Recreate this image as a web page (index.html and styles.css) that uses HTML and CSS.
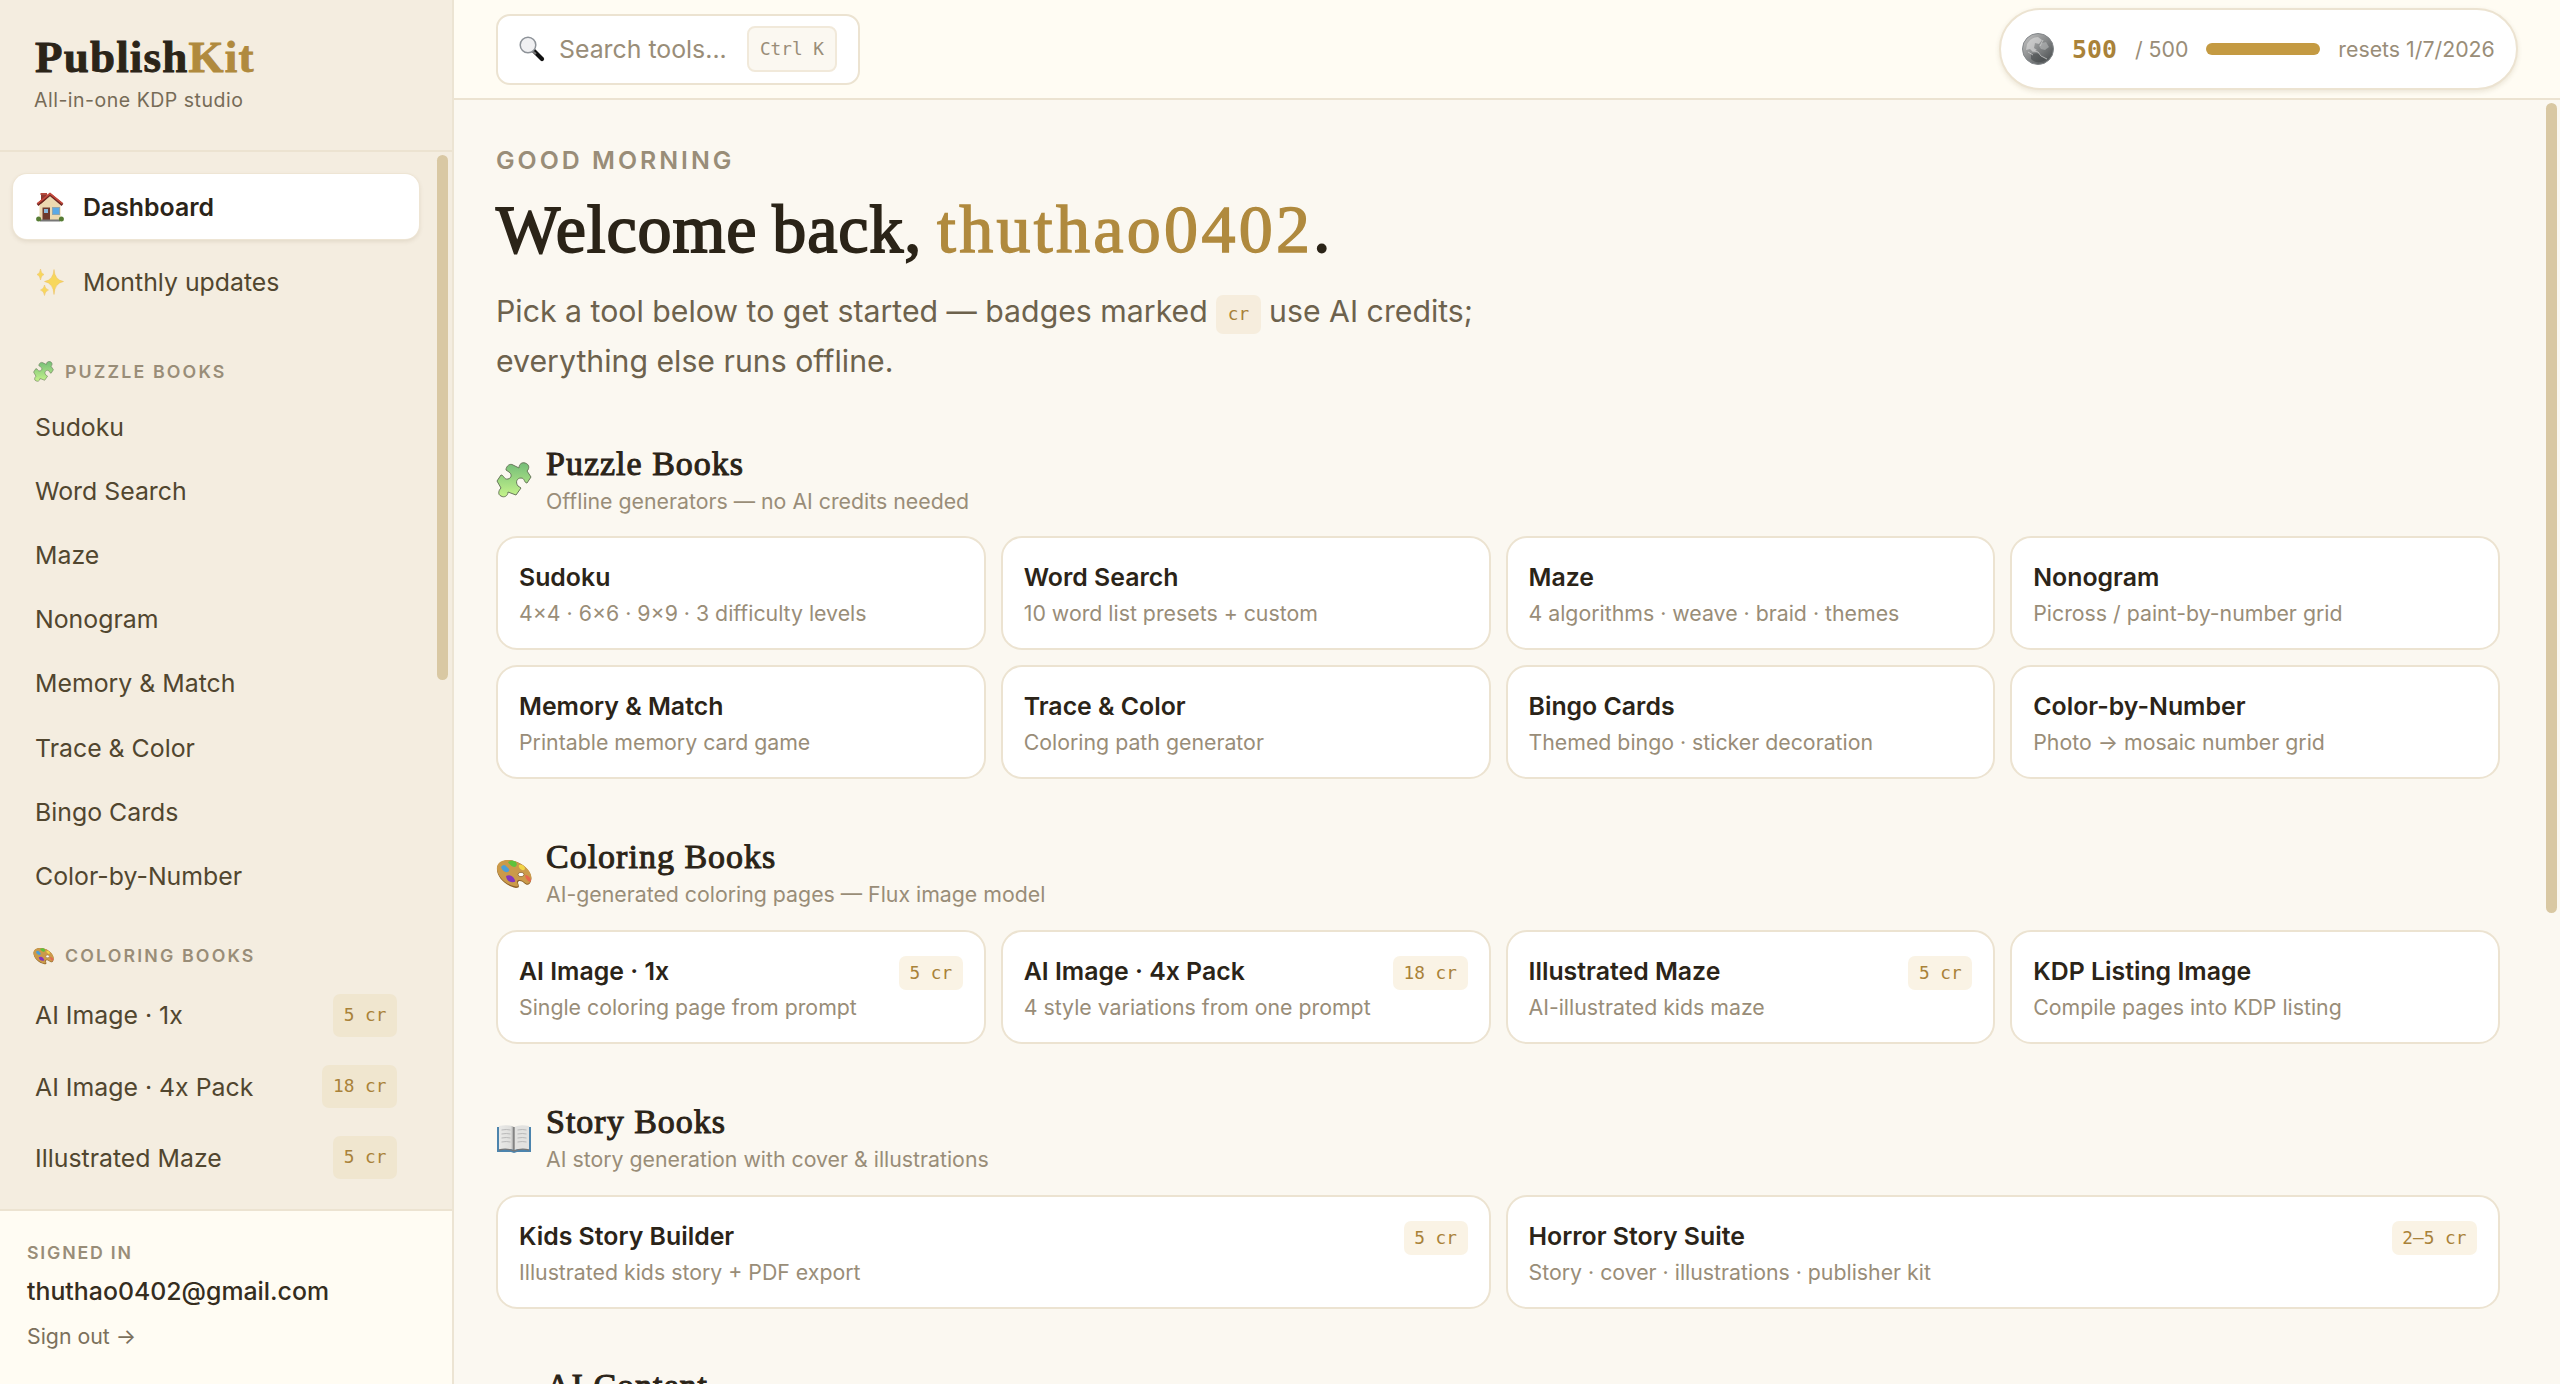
FILE: index.html
```html
<!DOCTYPE html>
<html lang="en">
<head>
<meta charset="utf-8">
<title>PublishKit</title>
<link rel="stylesheet" href="styles.css">
</head>
<body>
<svg class="defs" width="0" height="0" aria-hidden="true">
  <defs>
    <linearGradient id="green" x1="0" y1="0" x2="0" y2="1"><stop offset="0" stop-color="#74bd78"/><stop offset="1" stop-color="#c5f38b"/></linearGradient>
    <linearGradient id="page" x1="0" y1="0" x2="1" y2="0"><stop offset="0" stop-color="#e9e9e7"/><stop offset=".8" stop-color="#dededc"/><stop offset="1" stop-color="#8e8e8e"/></linearGradient>
    <linearGradient id="silver" x1="0" y1="0" x2="1" y2="1"><stop offset="0" stop-color="#c9c9c9"/><stop offset=".45" stop-color="#8c8e8f"/><stop offset="1" stop-color="#404446"/></linearGradient>
    <symbol id="i-puzzle" viewBox="0 0 36 36">
      <path d="M10 8C10 4 14 1 17 3L23 6C23 2 26 0 29 1C33 2 34 6 31 9L35 15L31 21C28 21 29 16 25 16C21 16 19 20 22 24L25 26L20 33L12 30C12 34 8 36 5 34C2 33 2 29 5 26L1 19L5 13C8 13 8 18 12 17C16 16 16 12 13 10Z" fill="url(#green)" stroke="#68785a" stroke-width="1" stroke-linejoin="round"/>
    </symbol>
    <symbol id="i-palette" viewBox="0 0 36 36">
      <path d="M1 13C2 6 12 3 21 7C31 11 37 20 35 26C34 30 31 31 28 28C26 26 22 25 22 28C23 31 24 33 20 33C9 31 0 21 1 13Z" fill="#8a6028"/>
      <path d="M1 12C2 5 12 3 21 7C31 11 37 19 35 25C34 29 31 30 28 27C26 25 21 24 21 27C22 30 23 32 20 31.500C9 30 0 20 1 12Z" fill="#cb9a4a"/>
      <path d="M5 12q3-4 6 0q4 3 1 5q-5 1-7-5" fill="#4c9fd8"/>
      <path d="M12 7q4-3 8 0q2 3-1 5q-4 0-7-5" fill="#5fc23c"/>
      <path d="M23 10q4-1 6 3q0 3-3 2q-4-2-3-5" fill="#f1d446"/>
      <path d="M29 20q4 0 6 5q0 3-3 1q-3-3-3-6" fill="#e8664e"/>
      <path d="M10 21q4-2 7 1q4 5 1 5q-7 1-8-6" fill="#8436bd"/>
      <ellipse cx="25" cy="19.500" rx="3" ry="2.200" fill="#fff" stroke="#8a6028" stroke-width=".8"/>
    </symbol>
    <symbol id="i-book" viewBox="0 0 36 36">
      <path d="M1 7H35V32H21L18 33L15 32H1Z" fill="#4c84ad"/>
      <path d="M3 6Q12 4 18 7V30Q11 28 3 30Z" fill="url(#page)"/>
      <path d="M33 6Q24 4 18 7V30Q25 28 33 30Z" fill="#e2e2e0"/>
      <path d="M3 30Q11 28 18 31Q25 28 33 30" fill="none" stroke="#777" stroke-width="1.300"/>
      <path d="M18 7V31" stroke="#777" stroke-width="1.300"/>
      <path d="M5.500 10q5-1 9 0M5.500 14q5-1 9 0M5.500 18q5-1 9 0M5.500 22q5-1 9 0M21.500 10q5-1 9 0M21.500 14q5-1 9 0M21.500 18q5-1 9 0M21.500 22q5-1 9 0" fill="none" stroke="#b9b9b9" stroke-width="1"/>
    </symbol>
    <symbol id="i-house" viewBox="0 0 28 30">
      <path d="M5 1.500h5.500V8L5 13Z" fill="#8d3a30"/><path d="M4.500 1h6.500v2H4.500z" fill="#b3483c"/>
      <path d="M3.500 13L14 4L24.500 13V28.500H3.500Z" fill="#ecd9b0"/>
      <path d="M1.500 12.800L14 2.500L26.500 12.800" fill="none" stroke="#6d2620" stroke-width="2.800"/>
      <path d="M1.500 11.600L14 1.500L26.500 11.600" fill="none" stroke="#c4483b" stroke-width="1.700"/>
      <path d="M6.500 15.500h7.500V28.500H6.500z" fill="#6e3a2c"/><path d="M8 17h4v4H8z" fill="#8ab9db"/>
      <path d="M16 15h8v8h-8z" fill="#8fa5ad"/><path d="M17 16h6v6h-6z" fill="#5aa9e6"/>
      <path d="M4 28.500h20" stroke="#777" stroke-width="2"/>
      <circle cx="2.600" cy="27" r="2.500" fill="#567c34"/><circle cx="25.400" cy="27" r="2.500" fill="#567c34"/>
    </symbol>
    <symbol id="i-sparkles" viewBox="0 0 28 28">
      <path d="M18 1.500Q18.700 12 27.500 13.500Q18.700 15 18 26.500Q17.300 15 8.500 13.500Q17.300 12 18 1.500ZM4.500 1Q5 5.500 8 6.500Q5 7.500 4.500 12Q4 7.500 1 6.500Q4 5.500 4.500 1ZM8.500 17Q9 21 12.500 22Q9 23 8.500 27.500Q8 23 4.500 22Q8 21 8.500 17Z" fill="#f7d75c" stroke="#ecbf62" stroke-width=".5"/>
    </symbol>
    <symbol id="i-search" viewBox="0 0 26 26">
      <path d="M15 15L23 23" stroke="#111" stroke-width="4.200" stroke-linecap="round"/>
      <path d="M14 15.500L17 18" stroke="#777" stroke-width="2"/>
      <circle cx="9" cy="9" r="7.800" fill="#f0f0f2" stroke="#8d9298" stroke-width="1.500"/>
    </symbol>
    <symbol id="i-coin" viewBox="0 0 32 32">
      <circle cx="16" cy="16" r="15.500" fill="url(#silver)" stroke="#83878a" stroke-width="1"/>
      <path d="M5 11q4-7 11-7l4 3-3 4-4-1-1 5 3 2-4 2-3-3-4 1Z" fill="#dadada" opacity=".65"/>
      <path d="M20 10l4-1 3 5-4 3-4-1-2-3Z" fill="#c2c4c4" opacity=".5"/>
      <path d="M9 21q7-2 10 1l5 5q-9 5-15-1Z" fill="#3b4042" opacity=".5"/>
      <path d="M12 18l4 1 3 4 6 3M21 7l-3 6M6 19l5 3" stroke="#d5d5d5" stroke-width="1" fill="none" opacity=".7"/>
    </symbol>
  </defs>
</svg>
<div class="app">
  <aside class="sidebar">
    <header class="brand">
      <div class="logo">Publish<span>Kit</span></div>
      <div class="tagline">All-in-one KDP studio</div>
    </header>
    <div class="nav-wrap">
      <nav class="nav">
        <a class="main-link active"><svg><use href="#i-house"/></svg>Dashboard</a>
        <a class="main-link"><svg><use href="#i-sparkles"/></svg>Monthly updates</a>
        <h3 class="group"><svg><use href="#i-puzzle"/></svg>PUZZLE BOOKS</h3>
        <a class="link">Sudoku</a>
        <a class="link">Word Search</a>
        <a class="link">Maze</a>
        <a class="link">Nonogram</a>
        <a class="link">Memory &amp; Match</a>
        <a class="link">Trace &amp; Color</a>
        <a class="link">Bingo Cards</a>
        <a class="link">Color-by-Number</a>
        <h3 class="group second"><svg><use href="#i-palette"/></svg>COLORING BOOKS</h3>
        <a class="link paid">AI Image · 1x<span class="chip">5 cr</span></a>
        <a class="link paid">AI Image · 4x Pack<span class="chip">18 cr</span></a>
        <a class="link paid">Illustrated Maze<span class="chip">5 cr</span></a>
      </nav>
      <div class="scroll"></div>
    </div>
    <footer class="account">
      <div class="label">SIGNED IN</div>
      <div class="email">thuthao0402@gmail.com</div>
      <div class="signout">Sign out →</div>
    </footer>
  </aside>
  <div class="content">
    <header class="topbar">
      <div class="search"><svg><use href="#i-search"/></svg><span class="placeholder">Search tools...</span><kbd>Ctrl K</kbd></div>
      <div class="credits"><svg><use href="#i-coin"/></svg><b>500</b><span class="total">/ 500</span><i class="meter"></i><span class="resets">resets 1/7/2026</span></div>
    </header>
    <div class="page">
      <main class="main">
        <div class="greeting">GOOD MORNING</div>
        <h1>Welcome back, <span>thuthao0402</span>.</h1>
        <p class="intro">Pick a tool below to get started — badges marked <span class="chip">cr</span> use AI credits;<br>everything else runs offline.</p>
        <section>
          <div class="head"><svg><use href="#i-puzzle"/></svg><div><h2>Puzzle Books</h2><p>Offline generators — no AI credits needed</p></div></div>
          <div class="grid">
            <div class="card"><div><h4>Sudoku</h4><p>4×4 · 6×6 · 9×9 · 3 difficulty levels</p></div></div>
            <div class="card"><div><h4>Word Search</h4><p>10 word list presets + custom</p></div></div>
            <div class="card"><div><h4>Maze</h4><p>4 algorithms · weave · braid · themes</p></div></div>
            <div class="card"><div><h4>Nonogram</h4><p>Picross / paint-by-number grid</p></div></div>
            <div class="card"><div><h4>Memory &amp; Match</h4><p>Printable memory card game</p></div></div>
            <div class="card"><div><h4>Trace &amp; Color</h4><p>Coloring path generator</p></div></div>
            <div class="card"><div><h4>Bingo Cards</h4><p>Themed bingo · sticker decoration</p></div></div>
            <div class="card"><div><h4>Color-by-Number</h4><p>Photo → mosaic number grid</p></div></div>
          </div>
        </section>
        <section>
          <div class="head"><svg><use href="#i-palette"/></svg><div><h2>Coloring Books</h2><p>AI-generated coloring pages — Flux image model</p></div></div>
          <div class="grid">
            <div class="card"><div><h4>AI Image · 1x</h4><p>Single coloring page from prompt</p></div><span class="chip">5 cr</span></div>
            <div class="card"><div><h4>AI Image · 4x Pack</h4><p>4 style variations from one prompt</p></div><span class="chip">18 cr</span></div>
            <div class="card"><div><h4>Illustrated Maze</h4><p>AI-illustrated kids maze</p></div><span class="chip">5 cr</span></div>
            <div class="card"><div><h4>KDP Listing Image</h4><p>Compile pages into KDP listing</p></div></div>
          </div>
        </section>
        <section>
          <div class="head"><svg><use href="#i-book"/></svg><div><h2>Story Books</h2><p>AI story generation with cover &amp; illustrations</p></div></div>
          <div class="grid two">
            <div class="card"><div><h4>Kids Story Builder</h4><p>Illustrated kids story + PDF export</p></div><span class="chip">5 cr</span></div>
            <div class="card"><div><h4>Horror Story Suite</h4><p>Story · cover · illustrations · publisher kit</p></div><span class="chip">2–5 cr</span></div>
          </div>
        </section>
        <section>
          <div class="head partial"><h2>AI Content</h2></div>
        </section>
      </main>
      <div class="scroll"></div>
    </div>
  </div>
</div>
</body>
</html>
```
FILE: styles.css
```css
* { box-sizing: border-box; margin: 0; padding: 0; }
body { width: 2560px; height: 1384px; overflow: hidden; background: #fbf8f1; color: #2b2519; font-family: Inter, "Liberation Sans", sans-serif; font-size: 24.85px; }
.defs { display: block; position: absolute; }
svg { flex: none; display: block; }
h1, h2, h3, h4 { font-weight: 600; }
.app { display: flex; height: 1384px; }

.sidebar { width: 454px; flex: none; display: flex; flex-direction: column; background: #f4ede0; border-right: 2px solid #ece4d3; }
.brand { height: 152px; padding: 32px 34px 0; border-bottom: 2px solid #ece3d1; }
.logo { font: bold 45px/50px "Liberation Serif", serif; letter-spacing: 1.2px; color: #2b2418; -webkit-text-stroke: .9px currentColor; padding-left: 1px; }
.logo span { color: #b08a3e; }
.tagline { margin-top: 4px; font-size: 19.5px; line-height: 28px; letter-spacing: .5px; color: #766b57; }
.nav-wrap { flex: 1; min-height: 0; display: flex; justify-content: space-between; padding: 3px 4px 0 13px; overflow: hidden; }
.nav { width: 406px; padding-top: 19px; }
.scroll { flex: none; border-radius: 6px; background: #d9c8a3; }
.nav-wrap .scroll { width: 11px; height: 525px; }
.main-link { display: flex; align-items: center; gap: 19px; height: 65px; margin-bottom: 10px; padding-left: 23px; border-radius: 14px; color: #51462f; }
.main-link svg { width: 28px; height: 30px; }
.main-link.active { background: #fff; color: #2b2418; font-weight: 600; box-shadow: 0 0 0 1px #eee5d4, 0 2px 5px rgba(90, 65, 20, .14); }
.group { display: flex; align-items: center; gap: 11px; height: 22px; margin: 46px 0 13px; padding-left: 20px; font-size: 17.75px; letter-spacing: 2.15px; color: #998d78; }
.group svg { width: 21px; height: 21px; }
.link { display: flex; align-items: center; justify-content: space-between; height: 64.1px; padding: 0 22px 0 22px; color: #51462f; }
.group.second { margin: 37px 0 13px; }
.link.paid { height: 71.2px; }
.chip { flex: none; display: inline-block; height: 34px; padding: 0 10.6px; border-radius: 7px; background: #faf3e5; color: #a98239; font: 17.75px/34px "DejaVu Sans Mono", monospace; }
.link .chip { height: 43px; line-height: 43px; background: #f0e6cf; }
.account { height: 175px; padding: 28px 27px 0; background: #fffcf3; border-top: 2px solid #ece3d1; }
.label { font-size: 17.75px; font-weight: 600; line-height: 28px; letter-spacing: 1.8px; color: #998d78; }
.email { margin-top: 5px; line-height: 38px; font-weight: 500; color: #352d1e; }
.signout { margin-top: 11px; font-size: 21.3px; line-height: 30px; color: #7b705b; }

.content { flex: 1; min-width: 0; display: flex; flex-direction: column; }
.topbar { height: 100px; flex: none; display: flex; justify-content: space-between; align-items: center; padding: 0 42px; background: #fffcf3; border-bottom: 2px solid #ece3d1; }
.search { display: flex; align-items: center; width: 364px; height: 71px; padding: 0 21px 0 21px; border: 2px solid #ece3d1; border-radius: 14px; background: #fff; color: #998d78; }
.search svg { width: 26px; height: 26px; margin-right: 14px; }
.placeholder { flex: 1; }
kbd { height: 46px; padding: 0 11px; border: 2px solid #f1e9da; border-radius: 8px; background: #fbf8f1; font: 17.75px/42px "DejaVu Sans Mono", monospace; }
.credits { display: flex; align-items: center; height: 82px; width: 519px; padding-left: 21px; border: 2px solid #ece3d1; border-radius: 41px; background: #fff; box-shadow: 0 2px 5px rgba(90, 65, 20, .12); font-size: 21.3px; color: #998d78; }
.credits svg { width: 32px; height: 32px; margin-right: 18px; }
.credits b { margin-right: 18px; font: bold 24.85px "DejaVu Sans Mono", monospace; color: #a98239; }
.meter { width: 114px; height: 12px; margin: 0 18px; border-radius: 6px; background: #c49a42; }

.page { flex: 1; min-height: 0; display: flex; padding-right: 3px; overflow: hidden; }
.page .scroll { width: 11px; height: 810px; margin-top: 3px; }
.main { flex: 1; padding: 45px 46px 0 42px; }
.greeting { font-weight: 600; line-height: 30px; letter-spacing: 3px; color: #998d78; }
h1 { margin-top: 14px; font: 68px/80px "Liberation Serif", serif; letter-spacing: .9px; word-spacing: -3px; color: #2b2418; -webkit-text-stroke: 1.8px currentColor; white-space: nowrap; }
h1 span { color: #b08a3e; letter-spacing: 3.3px; -webkit-text-stroke-width: 1.4px; }
.intro { margin-top: 17px; font-size: 30.25px; line-height: 50px; color: #6d624d; white-space: nowrap; }
.intro .chip { height: 39px; padding: 0 11.5px; line-height: 39px; background: #f6eddd; vertical-align: middle; position: relative; top: 1px; }
section { margin-top: 51px; }
.intro + section { margin-top: 52px; }
.head { display: flex; align-items: center; gap: 14px; height: 83px; }
section + section .head { height: 85px; }
.head svg { width: 36px; height: 36px; }
.head h2 { font: 34px/42px "Liberation Serif", serif; letter-spacing: 1px; color: #2b2418; -webkit-text-stroke: 1px currentColor; }
.head p { font-size: 21.3px; line-height: 32px; color: #998d78; }
section .head.partial, section + section .head.partial { height: 48px; padding: 5px 0 0 50px; align-items: flex-start; }
.grid { display: grid; grid-template-columns: repeat(4, 1fr); gap: 15px; margin-top: 15px; }
.grid.two { grid-template-columns: repeat(2, 1fr); }
.card { display: flex; justify-content: space-between; align-items: flex-start; height: 114px; padding: 23px 21px; border: 2px solid #ece3d1; border-radius: 21px; background: #fff; }
.card .chip { margin-top: 1px; }
.card h4 { font-size: 24.85px; line-height: 32px; color: #2b2418; }
.card p { margin-top: 3px; font-size: 21.3px; line-height: 34px; color: #998d78; }
```
